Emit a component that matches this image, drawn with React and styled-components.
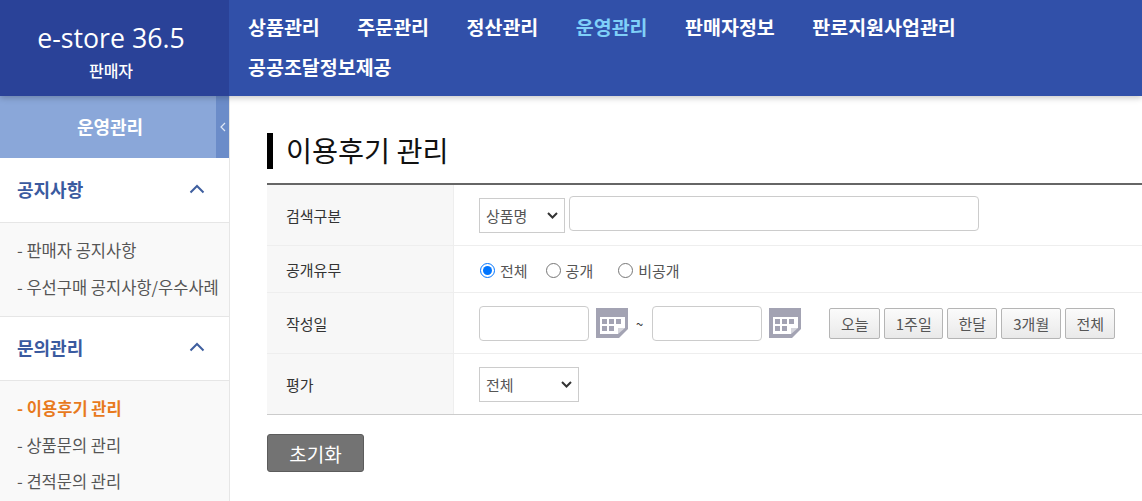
import React from 'react';
import styled, { createGlobalStyle } from 'styled-components';

const GlobalStyle = createGlobalStyle`
  html, body {
    margin: 0;
    padding: 0;
    background: #fff;
    overflow: hidden;
  }
  body, input, select, button {
    font-family: "Noto Sans CJK KR", "Noto Sans", sans-serif;
  }
`;

const arrow = encodeURIComponent(
  '<svg xmlns="http://www.w3.org/2000/svg" width="11" height="7" viewBox="0 0 11 7"><path d="M1 1l4.5 4.5L10 1" fill="none" stroke="#333" stroke-width="2"/></svg>'
);

const Page = styled.div`
  width: 1142px;
  height: 501px;
  overflow: hidden;
`;

const Header = styled.header`
  position: relative;
  z-index: 2;
  display: flex;
  height: 96px;
  background: #3150a9;
  box-shadow: 0 2px 6px rgba(0, 0, 0, 0.22);
`;

const Logo = styled.div`
  width: 229px;
  flex: none;
  background: #2a4298;
  color: #fff;
  display: flex;
  flex-direction: column;
  align-items: center;
  padding: 19px 7px 0 0;
  box-sizing: border-box;
`;

const LogoTitle = styled.div`
  font-family: "Open Sans", sans-serif;
  font-size: 26.7px;
  line-height: 38px;
  height: 38px;
`;

const LogoSub = styled.div`
  font-size: 16px;
  line-height: 20px;
  margin-top: 3px;
  font-weight: 500;
`;

const Nav = styled.nav`
  display: flex;
  flex-wrap: wrap;
  align-content: flex-start;
  column-gap: 37.5px;
  padding: 7px 0 0 19px;
  width: 780px;
  box-sizing: border-box;
`;

const NavItem = styled.a`
  font-size: 19.5px;
  line-height: 40px;
  font-weight: 700;
  color: ${p => (p.$active ? '#7fd0f8' : '#fff')};
  white-space: nowrap;
`;

const Body = styled.div`
  display: flex;
  height: 405px;
`;

const Sidebar = styled.aside`
  width: 230px;
  flex: none;
  box-sizing: border-box;
  border-right: 1px solid #e6e6e6;
`;

const SideTitle = styled.div`
  height: 62px;
  margin-bottom: 1px;
  background: #8aa7d9;
  display: flex;
`;

const SideTitleText = styled.div`
  flex: 1;
  color: #fff;
  font-size: 18px;
  font-weight: 700;
  line-height: 60px;
  text-align: center;
  padding-left: 4px;
`;

const SideToggle = styled.div`
  width: 13px;
  background: #6b8cc9;
  display: flex;
  align-items: center;
  justify-content: center;
`;

const GroupHead = styled.div`
  height: 64px;
  box-sizing: border-box;
  display: flex;
  align-items: center;
  justify-content: space-between;
  padding: 0 24px 3px 17px;
  border-bottom: 1px solid #e6e6e6;
  color: #3a5a9f;
  font-size: 18px;
  font-weight: 700;
`;

const SubList = styled.ul`
  list-style: none;
  margin: 0;
  padding: 9px 0 11px 17px;
  background: #f9f9f9;
  border-bottom: 1px solid #e6e6e6;
`;

const SubItem = styled.li`
  font-size: 16.5px;
  line-height: 36.5px;
  white-space: nowrap;
  color: ${p => (p.$active ? '#e87a1d' : '#555')};
  font-weight: ${p => (p.$active ? 700 : 400)};
`;

const Main = styled.main`
  flex: 1;
  min-width: 0;
  padding: 37px 0 0 37px;
`;

const Title = styled.h1`
  margin: 0;
  height: 36px;
  border-left: 6px solid #000;
  padding-left: 13px;
  font-size: 28.3px;
  font-weight: 400;
  line-height: 34px;
  color: #111;
  white-space: nowrap;
`;

const Form = styled.div`
  margin-top: 14px;
  border-top: 2px solid #666;
  border-bottom: 1px solid #ccc;
`;

const Row = styled.div`
  display: flex;
  height: ${p => p.$h}px;
  & + & {
    border-top: 1px solid #eee;
  }
`;

const Label = styled.div`
  width: 187px;
  flex: none;
  box-sizing: border-box;
  background: #f7f7f7;
  border-right: 1px solid #eee;
  padding-left: 19px;
  display: flex;
  align-items: center;
  font-size: 15px;
  color: #333;
`;

const Value = styled.div`
  flex: 1;
  display: flex;
  align-items: center;
  padding-left: 25px;
`;

const Select = styled.select`
  appearance: none;
  width: ${p => p.$w}px;
  height: 35px;
  box-sizing: border-box;
  border: 1px solid #ccc;
  border-radius: 0;
  background: #fff url("data:image/svg+xml,${arrow}") no-repeat right 6px center;
  color: #555;
  font-size: 15px;
  padding: 0 0 0 6px;
`;

const TextInput = styled.input`
  width: ${p => p.$w}px;
  height: 35px;
  box-sizing: border-box;
  border: 1px solid #ccc;
  border-radius: 4px;
  margin-left: ${p => p.$ml || 0}px;
  margin-bottom: ${p => p.$mb || 0}px;
  background: #fff;
`;

const RadioGroup = styled.div`
  display: flex;
  margin-top: 2px;
`;

const RadioLabel = styled.label`
  display: flex;
  align-items: center;
  font-size: 15px;
  color: #555;
  margin-right: ${p => p.$mr}px;
`;

const Radio = styled.input`
  width: 15px;
  height: 15px;
  margin: 0 5px 0 1px;
`;

const Tilde = styled.span`
  font-size: 13px;
  color: #333;
  margin: 0 9px 0 8px;
`;

const CalIcon = styled.svg`
  margin-left: 7px;
  flex: none;
`;

const QuickButtons = styled.div`
  display: flex;
  gap: 4px;
  margin-left: 28px;
`;

const QuickButton = styled.button`
  height: 31px;
  width: ${p => p.$w}px;
  padding: 0;
  box-sizing: border-box;
  border: 1px solid #b5b5b5;
  border-radius: 2px;
  background: linear-gradient(#fbfbfb, #e9e9e9);
  color: #555;
  font-size: 15px;
`;

const ResetButton = styled.button`
  display: block;
  margin-top: 19px;
  width: 97px;
  height: 38px;
  padding: 0;
  border: 1px solid #5c5c5c;
  border-radius: 3px;
  background: #737373;
  color: #fff;
  font-size: 19px;
`;

const Chevron = () => (
  <svg width="16" height="10" viewBox="0 0 16 10" fill="none">
    <path d="M1.5 8.5 8 2l6.5 6.5" stroke="#3f5f9f" strokeWidth="2" />
  </svg>
);

const Calendar = () => (
  <CalIcon width="32" height="30" viewBox="0 0 32 30">
    <path d="M0 0h32v21l-9 9H0z" fill="#a3a3b3" />
    <path d="M4 9h25v11h-7v6H4z" fill="#fff" />
    <path d="M22 20h7l-7 6z" fill="#d5d5dc" />
    <path d="M6 11h5v5H6zM13 11h5v5h-5zM20 11h5v5h-5zM6 18h5v5H6zM13 18h5v5h-5z" fill="#a3a3b3" />
  </CalIcon>
);

const NAV = ['상품관리', '주문관리', '정산관리', '운영관리', '판매자정보', '판로지원사업관리', '공공조달정보제공'];
const QUICK = [['오늘', 51], ['1주일', 59], ['한달', 50], ['3개월', 60], ['전체', 50]];

export default function App() {
  return (
    <Page>
      <GlobalStyle />
      <Header>
        <Logo>
          <LogoTitle>e-store 36.5</LogoTitle>
          <LogoSub>판매자</LogoSub>
        </Logo>
        <Nav>
          {NAV.map(n => (
            <NavItem key={n} $active={n === '운영관리'}>{n}</NavItem>
          ))}
        </Nav>
      </Header>
      <Body>
        <Sidebar>
          <SideTitle>
            <SideTitleText>운영관리</SideTitleText>
            <SideToggle>
              <svg width="6" height="10" viewBox="0 0 6 10" fill="none">
                <path d="M5 1 1 5l4 4" stroke="#dfe7f6" strokeWidth="1.2" />
              </svg>
            </SideToggle>
          </SideTitle>
          <GroupHead>공지사항<Chevron /></GroupHead>
          <SubList>
            <SubItem>- 판매자 공지사항</SubItem>
            <SubItem>- 우선구매 공지사항/우수사례</SubItem>
          </SubList>
          <GroupHead>문의관리<Chevron /></GroupHead>
          <SubList>
            <SubItem $active>- 이용후기 관리</SubItem>
            <SubItem>- 상품문의 관리</SubItem>
            <SubItem>- 견적문의 관리</SubItem>
          </SubList>
        </Sidebar>
        <Main>
          <Title>이용후기 관리</Title>
          <Form>
            <Row $h={60}>
              <Label>검색구분</Label>
              <Value>
                <Select $w={86} defaultValue="상품명"><option>상품명</option></Select>
                <TextInput $w={410} $ml={4} $mb={3} />
              </Value>
            </Row>
            <Row $h={46}>
              <Label>공개유무</Label>
              <Value>
                <RadioGroup>
                  <RadioLabel $mr={17}><Radio type="radio" name="open" defaultChecked />전체</RadioLabel>
                  <RadioLabel $mr={24}><Radio type="radio" name="open" />공개</RadioLabel>
                  <RadioLabel $mr={0}><Radio type="radio" name="open" />비공개</RadioLabel>
                </RadioGroup>
              </Value>
            </Row>
            <Row $h={60}>
              <Label>작성일</Label>
              <Value>
                <TextInput $w={110} />
                <Calendar />
                <Tilde>~</Tilde>
                <TextInput $w={110} />
                <Calendar />
                <QuickButtons>
                  {QUICK.map(([t, w]) => <QuickButton key={t} $w={w}>{t}</QuickButton>)}
                </QuickButtons>
              </Value>
            </Row>
            <Row $h={60}>
              <Label>평가</Label>
              <Value>
                <Select $w={100} defaultValue="전체"><option>전체</option></Select>
              </Value>
            </Row>
          </Form>
          <ResetButton>초기화</ResetButton>
        </Main>
      </Body>
    </Page>
  );
}
